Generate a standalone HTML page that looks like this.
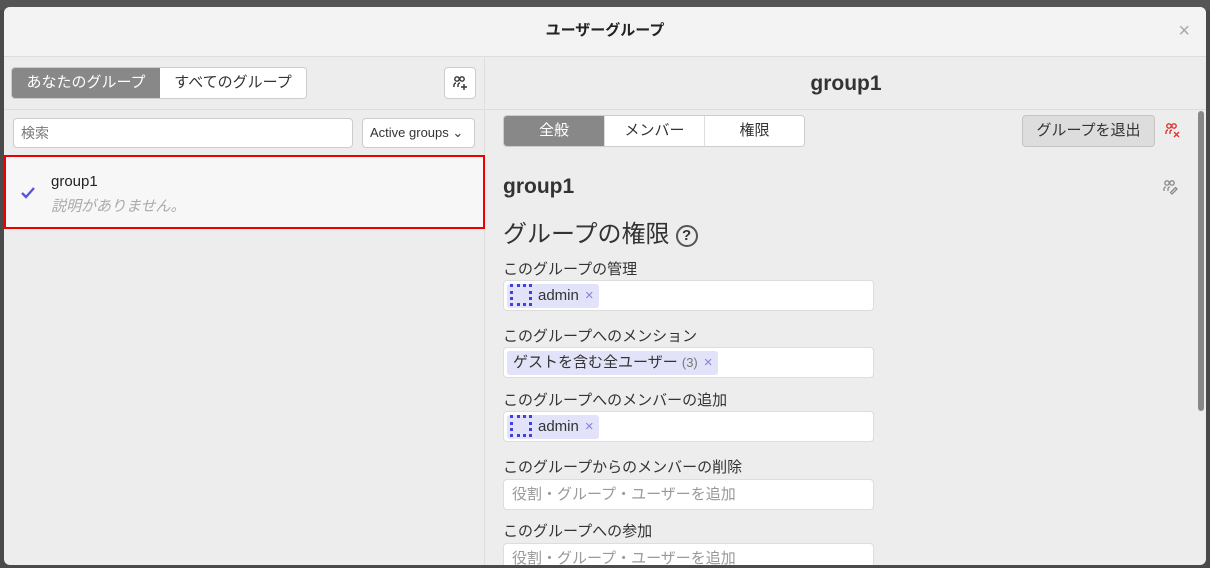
<!DOCTYPE html>
<html><head><meta charset="utf-8"><style>
*{box-sizing:border-box;margin:0;padding:0}
body{width:1210px;height:568px;overflow:hidden;background:#4a4a4a;font-family:"Liberation Sans","Noto Sans CJK JP",sans-serif;color:#333;position:relative}
.top{position:absolute;left:0;top:0;width:1210px;height:10px;background:#555}
.modal{position:absolute;left:4px;top:7px;width:1202px;height:558px;background:#ededed;border-radius:6px;overflow:hidden}
.hdr{height:50px;background:#f3f3f3;border-bottom:1px solid #ddd;text-align:center;font-weight:bold;font-size:15px;line-height:48px;color:#222;position:relative}
.close{position:absolute;right:16px;top:0;color:#aaa;font-size:20px;font-weight:normal}
.left{position:absolute;left:0;top:51px;width:481px;bottom:0;border-right:1px solid #ddd}
.lrow{height:52px;border-bottom:1px solid #ddd;position:relative}
.seg{position:absolute;left:7px;top:9px;display:flex;border:1px solid #ccc;border-radius:4px;overflow:hidden;height:32px;font-size:15px}
.seg div{line-height:30px;background:#fff;text-align:center}
.seg .on{background:#888;color:#fff}
.ib{position:absolute;left:440px;top:9px;width:32px;height:32px;background:#fff;border:1px solid #ccc;border-radius:4px}
.ib svg{position:absolute;left:7px;top:7px}
.srch{position:absolute;left:9px;top:60px;width:340px;height:30px;background:#fff;border:1px solid #ccc;border-radius:4px;font-size:14px;color:#777;padding-left:7px;line-height:28px}
.dd{position:absolute;left:358px;top:60px;width:113px;height:30px;background:#fff;border:1px solid #ccc;border-radius:4px;font-size:13px;padding-left:7px;line-height:28px}
.item{position:absolute;left:0;top:97px;width:481px;height:74px;background:#f7f7f7;border:2px solid #e00}
.item svg{position:absolute;left:14px;top:29px}
.item .n{position:absolute;left:45px;top:16px;font-size:15px;color:#222}
.item .d{position:absolute;left:45px;top:38px;font-size:15px;color:#aaa;font-style:italic}
.right{position:absolute;left:482px;top:51px;right:0;bottom:0}
.rh{height:52px;border-bottom:1px solid #ddd;text-align:center;font-size:21px;font-weight:bold;line-height:52px;color:#333}
.tabs{position:absolute;left:17px;top:57px;display:flex;border:1px solid #ccc;border-radius:4px;overflow:hidden;height:32px;font-size:15px}
.tabs div{width:100px;text-align:center;line-height:30px;background:#fff;border-left:1px solid #ddd}
.tabs .on{background:#888;color:#fff;border-left:0}
.leave{position:absolute;left:536px;top:57px;width:133px;height:32px;background:#ddd;border:1px solid #c4c4c4;border-radius:4px;font-size:15px;text-align:center;line-height:30px}
.xr{position:absolute;left:678px;top:64px}
.sb{position:absolute;left:712px;top:53px;width:6px;height:300px;background:#888;border-radius:3px}
.g1{position:absolute;left:17px;top:117px;font-size:21px;font-weight:bold;color:#333}
.g1i{position:absolute;left:676px;top:121px}
.perm{position:absolute;left:17px;top:156px;font-size:24px;color:#333}
.q{display:inline-block;width:22px;height:22px;border:2px solid #555;border-radius:50%;font-size:15px;text-align:center;line-height:18px;font-weight:bold;vertical-align:2px;margin-left:6px}
.lab{position:absolute;left:17px;font-size:15px;color:#333}
.box{position:absolute;left:17px;width:371px;height:31px;background:#fff;border:1px solid #ddd;border-radius:4px;font-size:15px;color:#999;padding:3px 3px;line-height:23px}
.pill{display:inline-block;background:#e2e2f8;border-radius:3px;padding:0 5px 0 3px;color:#333;height:24px;line-height:24px}
.pill .ic{display:inline-block;width:22px;height:22px;border:3px dotted #4040e0;vertical-align:-6px;margin-right:6px}
.pill .x{color:#8880d8;margin-left:6px}
.pill small{color:#777;font-size:13px}
.ph{padding-left:5px}
</style></head><body>
<div class="top"></div>
<div class="modal">
<div class="hdr">ユーザーグループ<span class="close">×</span></div>
<div class="left">
<div class="lrow"><div class="seg"><div class="on" style="width:148px">あなたのグループ</div><div style="width:146px">すべてのグループ</div></div>
<div class="ib"><svg width="16" height="16" viewBox="0 0 16 16" fill="none" stroke="#333" stroke-width="1.4"><circle cx="5" cy="4" r="2.2"/><circle cx="10" cy="4" r="2.2"/><path d="M2 12v-2a2 2 0 0 1 2-2M6 12v-2a2 2 0 0 1 2-2M12 9v6M9 12h6"/></svg></div></div>
<div class="srch">検索</div>
<div class="dd">Active groups ⌄</div>
<div class="item"><svg width="16" height="14" viewBox="0 0 16 14"><path d="M2 7l4 4 8-9" fill="none" stroke="#5a57d6" stroke-width="2.4"/></svg><div class="n">group1</div><div class="d">説明がありません。</div></div>
</div>
<div class="right">
<div class="rh">group1</div>
<div class="tabs"><div class="on">全般</div><div>メンバー</div><div>権限</div></div>
<div class="leave">グループを退出</div>
<div class="xr"><svg width="16" height="16" viewBox="0 0 16 16" fill="none" stroke="#d33" stroke-width="1.4"><circle cx="5" cy="4" r="2.2"/><circle cx="10" cy="4" r="2.2"/><path d="M2 12v-2a2 2 0 0 1 2-2M6 12v-2a2 2 0 0 1 2-2M10 10l5 5M15 10l-5 5"/></svg></div>
<div class="sb"></div>
<div class="g1">group1</div>
<div class="g1i"><svg width="16" height="16" viewBox="0 0 16 16" fill="none" stroke="#888" stroke-width="1.3"><circle cx="5" cy="4" r="2.2"/><circle cx="10" cy="4" r="2.2"/><path d="M2 12v-2a2 2 0 0 1 2-2M6 12v-2a2 2 0 0 1 2-2M10 15l5-5-1.5-1.5-5 5z"/></svg></div>
<div class="perm">グループの権限<span class="q">?</span></div>
<div class="lab" style="top:200px">このグループの管理</div>
<div class="box" style="top:222px"><span class="pill"><span class="ic"></span>admin<span class="x">×</span></span></div>
<div class="lab" style="top:267px">このグループへのメンション</div>
<div class="box" style="top:289px"><span class="pill" style="padding-left:6px">ゲストを含む全ユーザー <small>(3)</small><span class="x">×</span></span></div>
<div class="lab" style="top:331px">このグループへのメンバーの追加</div>
<div class="box" style="top:353px"><span class="pill"><span class="ic"></span>admin<span class="x">×</span></span></div>
<div class="lab" style="top:398px">このグループからのメンバーの削除</div>
<div class="box" style="top:421px"><span class="ph">役割・グループ・ユーザーを追加</span></div>
<div class="lab" style="top:462px">このグループへの参加</div>
<div class="box" style="top:485px"><span class="ph">役割・グループ・ユーザーを追加</span></div>
</div>
</div>
</body></html>
